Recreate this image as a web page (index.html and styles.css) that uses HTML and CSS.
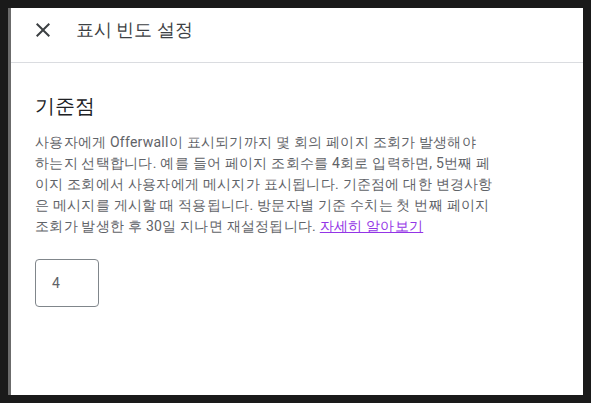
FILE: index.html
```html
<!DOCTYPE html>
<html lang="ko">
<head>
<meta charset="utf-8">
<link rel="stylesheet" href="styles.css">
</head>
<body>
<div class="panel">
  <header class="header">
    <button class="close" aria-label="닫기">
      <svg width="24" height="24" viewBox="0 0 24 24"><path d="M19 6.41 17.59 5 12 10.59 6.41 5 5 6.41 10.59 12 5 17.59 6.41 19 12 13.41 17.59 19 19 17.59 13.41 12z" fill="#3c4043"/></svg>
    </button>
    <h1 class="title">표시 빈도 설정</h1>
  </header>
  <main class="content">
    <h2 class="heading">기준점</h2>
    <p class="desc">사용자에게 Offerwall이 표시되기까지 몇 회의 페이지 조회가 발생해야 하는지 선택합니다. 예를 들어 페이지 조회수를 4회로 입력하면, 5번째 페이지 조회에서 사용자에게 메시지가 표시됩니다. 기준점에 대한 변경사항은 메시지를 게시할 때 적용됩니다. 방문자별 기준 수치는 첫 번째 페이지 조회가 발생한 후 30일 지나면 재설정됩니다. <a href="#" class="link">자세히 알아보기</a></p>
    <div class="field"><span class="value">4</span></div>
  </main>
</div>
</body>
</html>
```
FILE: styles.css
```css
html, body {
  margin: 0;
  height: 100%;
}
body {
  background: #1a1a1a;
  padding: 8px;
  box-sizing: border-box;
  font-family: Roboto, sans-serif;
}
.panel {
  background: #fff;
  height: 100%;
  border-left: 3px solid #6b6b6b;
  box-sizing: border-box;
}
.header {
  border-bottom: 1px solid #dadce0;
  display: flex;
  align-items: flex-start;
  padding: 10px 0 0 20px;
  height: 44px;
}
.close {
  border: 0;
  background: none;
  padding: 0;
  width: 24px;
  height: 24px;
  display: block;
}
.close svg { display: block; }
.title {
  margin: 0 0 0 21px;
  font-size: 18px;
  line-height: 24px;
  font-weight: 400;
  color: #3c4043;
}
.content {
  padding: 31px 24px 0 24px;
}
.heading {
  margin: 0;
  font-size: 20px;
  line-height: 24px;
  font-weight: 400;
  color: #202124;
}
.desc {
  margin: 14px 0 0 0;
  max-width: 458px;
  font-size: 14px;
  line-height: 21px;
  letter-spacing: 0.25px;
  word-break: break-all;
  color: #5f6368;
}
.link {
  color: #9334e6;
  text-decoration: underline;
}
.field {
  margin-top: 22px;
  width: 64px;
  height: 48px;
  border: 1px solid #80868b;
  border-radius: 4px;
  box-sizing: border-box;
  display: flex;
  align-items: center;
  padding-left: 16px;
}
.value {
  font-size: 14px;
  color: #5f6368;
}
```
